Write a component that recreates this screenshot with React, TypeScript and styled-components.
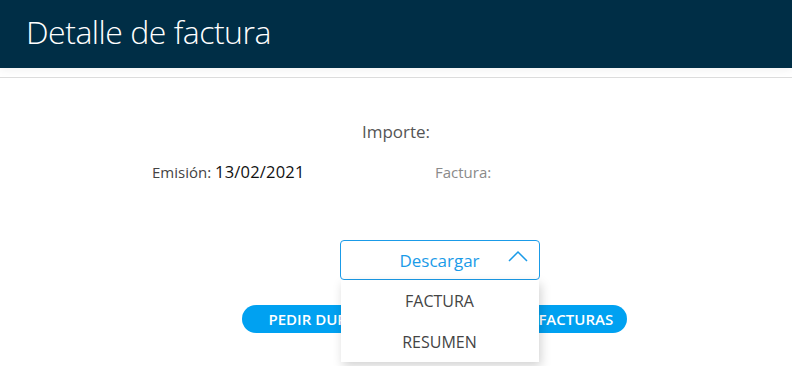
import React from 'react';
import styled, { createGlobalStyle } from 'styled-components';

const GlobalStyle = createGlobalStyle`
  html, body {
    margin: 0;
    padding: 0;
    background: #fff;
    font-family: 'Open Sans', 'Noto Sans', sans-serif;
  }
`;

const Page = styled.div`
  width: 792px;
  height: 366px;
  overflow: hidden;
  background: #fff;
`;

const Header = styled.header`
  height: 68px;
  background: #002e46;
  display: flex;
  align-items: center;
  padding-left: 26px;
  box-shadow: 0 2px 8px rgba(0, 0, 0, 0.06);
`;

const Title = styled.h1`
  margin: 0 0 6px;
  font-size: 32px;
  font-weight: 300;
  color: #fff;
  letter-spacing: -0.5px;
`;

const Divider = styled.hr`
  margin: 9px 0 0;
  border: 0;
  border-top: 1px solid #dcdcdc;
`;

const Summary = styled.section`
  padding-top: 42px;
  display: flex;
  flex-direction: column;
`;

const Amount = styled.div`
  text-align: center;
  font-size: 17px;
  color: #555;
  line-height: 24px;
`;

const InfoRow = styled.div`
  margin-top: 16px;
  padding-left: 152px;
  display: grid;
  grid-template-columns: 283px auto;
  align-items: baseline;
`;

const Label = styled.span<{ $muted?: boolean }>`
  font-size: 15px;
  color: ${(p) => (p.$muted ? '#8a8a8a' : '#444')};
`;

const Value = styled.span`
  font-size: 16.5px;
  color: #111;
  letter-spacing: 0.2px;
`;

const Actions = styled.section`
  margin-top: 57px;
  display: flex;
  flex-direction: column;
  align-items: center;
  padding-left: 87px;
`;

const Dropdown = styled.div`
  position: relative;
  width: 200px;
`;

const Trigger = styled.button`
  width: 200px;
  height: 40px;
  box-sizing: border-box;
  border: 1px solid #1a9be8;
  border-radius: 4px;
  background: #fff;
  color: #1a9be8;
  font-family: inherit;
  font-size: 17px;
  display: flex;
  align-items: center;
  justify-content: center;
  position: relative;
  padding: 0;
`;

const Chevron = styled.svg`
  position: absolute;
  right: 11px;
  top: 9px;
`;

const Menu = styled.ul`
  position: absolute;
  top: 40px;
  left: 1px;
  width: 198px;
  margin: 0;
  padding: 0;
  list-style: none;
  background: #fff;
  box-shadow: 2px 4px 10px rgba(0, 0, 0, 0.18);
  z-index: 2;
`;

const MenuItem = styled.li`
  height: 41px;
  display: flex;
  align-items: center;
  justify-content: center;
  font-size: 16px;
  color: #444;
`;

const ButtonRow = styled.div`
  margin-top: 25px;
  margin-right: 10px;
  display: flex;
  gap: 13px;
`;

const Pill = styled.button`
  width: 186px;
  height: 28px;
  padding: 0;
  border: 0;
  border-radius: 14px;
  background: #00a1f1;
  color: #fff;
  font-family: inherit;
  font-size: 15px;
  font-weight: 600;
  white-space: nowrap;
  display: flex;
  align-items: center;
  justify-content: center;
`;

export default function App() {
  return (
    <Page>
      <GlobalStyle />
      <Header>
        <Title>Detalle de factura</Title>
      </Header>
      <Divider />
      <Summary>
        <Amount>Importe:</Amount>
        <InfoRow>
          <span>
            <Label>Emisión: </Label>
            <Value>13/02/2021</Value>
          </span>
          <Label $muted>Factura:</Label>
        </InfoRow>
      </Summary>
      <Actions>
        <Dropdown>
          <Trigger>
            Descargar
            <Chevron width="20" height="12" viewBox="0 0 20 12">
              <polyline points="1,11 10,2 19,11" fill="none" stroke="#1a9be8" strokeWidth="1.5" />
            </Chevron>
          </Trigger>
          <Menu>
            <MenuItem>FACTURA</MenuItem>
            <MenuItem>RESUMEN</MenuItem>
          </Menu>
        </Dropdown>
        <ButtonRow>
          <Pill>PEDIR DUPLICADO</Pill>
          <Pill>TODAS LAS FACTURAS</Pill>
        </ButtonRow>
      </Actions>
    </Page>
  );
}
